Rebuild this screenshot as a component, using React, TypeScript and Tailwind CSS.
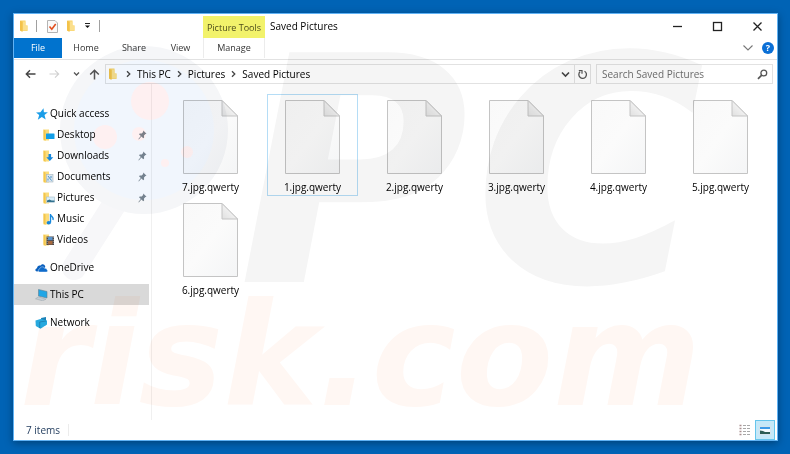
import React from "react";

const files = [
  "7.jpg.qwerty",
  "1.jpg.qwerty",
  "2.jpg.qwerty",
  "3.jpg.qwerty",
  "4.jpg.qwerty",
  "5.jpg.qwerty",
  "6.jpg.qwerty",
];

const quickAccess = [
  { label: "Desktop", icon: "desktop", pinned: true },
  { label: "Downloads", icon: "downloads", pinned: true },
  { label: "Documents", icon: "documents", pinned: true },
  { label: "Pictures", icon: "pictures", pinned: true },
  { label: "Music", icon: "music", pinned: false },
  { label: "Videos", icon: "videos", pinned: false },
];

const FolderIcon = () => (
  <svg width="10" height="12" viewBox="0 0 10 12" aria-hidden="true">
    <path d="M1.5 0.5h5v5h2v5.5h-7z" fill="#f9d266" />
    <path d="M4 1.500h2.500v4h2v5H4z" fill="#fbdf8c" />
    <path d="M1 0.500l2.500 1.500v10L1 10.500z" fill="#f3c24a" />
  </svg>
);

const SmallFolderIcon = ({ kind }: { kind: string }) => (
  <svg width="12" height="12" viewBox="0 0 12 12" aria-hidden="true">
    <path d="M0.5 0.5h5.500v11h-5.500z" fill="#fbdc7c" />
    <path d="M0.5 0.5l2 1v10.500l-2-1.500z" fill="#f3c64c" />
    {kind === "desktop" && <rect x="3" y="4.5" width="8.5" height="5.5" rx="0.5" fill="#139fe8" />}
    {kind === "downloads" && <path d="M5.5 4h2.600v3.200h2.200L6.800 11 3.300 7.200h2.200z" fill="#1687dc" />}
    {kind === "documents" && (
      <>
        <rect x="3.5" y="3.5" width="6.5" height="7.5" fill="#dbe6ee" stroke="#a5b4bf" strokeWidth="0.6" />
        <path d="M5 5l3.500 4.500M8 5v2M5 7.500v2" stroke="#4b93c9" />
      </>
    )}
    {kind === "pictures" && (
      <>
        <rect x="3.5" y="5" width="8" height="5.5" fill="#d9effb" stroke="#a9bdc9" strokeWidth="0.6" />
        <path d="M4 10V8.500l2.500-1 2 1h3V10z" fill="#32728f" />
      </>
    )}
    {kind === "music" && (
      <>
        <path d="M7.500 1v8.500M7.500 1.500c.3 2 3.500 2.300 2.500 5.500" stroke="#1687dc" strokeWidth="1.4" fill="none" />
        <ellipse cx="5.8" cy="9.7" rx="2.2" ry="1.7" fill="#1687dc" />
      </>
    )}
    {kind === "videos" && (
      <>
        <rect x="3.5" y="2.5" width="7.5" height="8.5" fill="#4a4748" />
        <rect x="5" y="3" width="4.5" height="3.2" fill="#5793cc" />
        <rect x="5" y="7" width="4.5" height="3.5" fill="#a86a3e" />
        <path d="M4.200 3v8M10.300 3v8" stroke="#c8c8c8" strokeWidth="0.6" strokeDasharray="1 1" />
      </>
    )}
  </svg>
);

const StarIcon = () => (
  <svg width="12" height="12" viewBox="0 0 12 12" aria-hidden="true">
    <path d="M7.500 0.300l.4 3.900 4 .1-3.400 2.600 1.200 4.600-3.900-2.600L1.800 11.700l1.400-4.600L0 4.600l4.400-.4z" fill="#1a9de8" />
  </svg>
);

const CloudIcon = () => (
  <svg width="13" height="12" viewBox="0 0 13 12" aria-hidden="true">
    <path d="M2 9.500C-.3 9.500 0 6.400 2 6.200 2.200 3.600 4.400 3 5.300 3.700 6.900 1 10.200 2 10.300 5L8 8z" fill="#0a5fbd" />
    <path d="M4.500 10C2.800 9.600 3 7 4.800 6.700 5.200 4.400 8.800 4.200 9.500 6.200c2-.2 2.400.9 2.400 1.500 1.300.5.900 2.300-.4 2.300z" fill="#0f6ccb" stroke="#fff" strokeWidth="0.4" />
  </svg>
);

const ComputerIcon = () => (
  <svg width="13" height="12" viewBox="0 0 13 12" aria-hidden="true">
    <path d="M3.500 0.500l8.500 2v6.500l-8.500-2z" fill="#20a6e6" stroke="#5f7f92" strokeWidth="0.6" />
    <path d="M0.500 9.800l3-2 7.500 2.400-3.500 1.600z" fill="#c3ccd2" stroke="#96a2aa" strokeWidth="0.5" />
  </svg>
);

const NetworkIcon = () => (
  <svg width="13" height="12" viewBox="0 0 13 12" aria-hidden="true">
    <path d="M6 1l5-1v8l-4 1.500z" fill="#1b82b8" />
    <path d="M0.500 3.500l5-1.500 6.500 1.500v4L5.500 11.800 0.800 9z" fill="#27a9de" />
    <path d="M4.600 5l6.500-1M4.700 5v6" stroke="#1877a8" strokeWidth="0.7" />
  </svg>
);

const PinIcon = () => (
  <svg width="9" height="10" viewBox="0 0 9 10" aria-hidden="true">
    <path d="M5.300 0.500L8.500 3.700 7.400 4 6 5.600l.1 2-.8.700L3.400 6.600 0.800 9.400 0.400 9l2.400-3L1 4.200l.7-.8 2 .1L5.100 2z" fill="#7b8790" />
  </svg>
);

const PageIcon = () => (
  <svg width="57" height="76" viewBox="0 0 57 76" aria-hidden="true">
    <defs>
      <linearGradient id="page" x1="0" y1="0" x2="1" y2="1">
        <stop offset="0" stopColor="#f9f9f9" />
        <stop offset="0.5" stopColor="#fbfbfb" />
        <stop offset="1" stopColor="#f4f5f6" />
      </linearGradient>
      <linearGradient id="fold" x1="0" y1="1" x2="0.6" y2="0.4">
        <stop offset="0" stopColor="#e0e0e0" />
        <stop offset="1" stopColor="#f3f3f3" />
      </linearGradient>
    </defs>
    <path d="M1.500 1.500h38.500l15.500 15.500v57.500h-54z" fill="url(#page)" stroke="#c4c4c4" />
    <path d="M40 1.500V17h15.500z" fill="url(#fold)" stroke="#c4c4c4" />
  </svg>
);

const Chevron = () => (
  <svg width="5" height="8" viewBox="0 0 5 8" fill="none" aria-hidden="true">
    <path d="M1 1.200L3.800 4 1 6.800" stroke="#444" strokeWidth="1.3" />
  </svg>
);

const Watermark = () => (
  <svg
    className="pointer-events-none absolute inset-0 h-full w-full mix-blend-multiply"
    viewBox="0 0 790 454"
    aria-hidden="true"
  >
    <path d="M114 205L74 268" stroke="#f7f7f9" strokeWidth="24" strokeLinecap="round" />
    <circle cx="144" cy="130" r="84" fill="#f5f6f8" />
    <circle cx="144" cy="130" r="70" fill="#f1f6fd" />
    <g fill="#fef0f1">
      <circle cx="150" cy="101" r="19" />
      <circle cx="105" cy="137" r="12" />
      <circle cx="139" cy="134" r="7" />
      <circle cx="187" cy="152" r="6" />
      <circle cx="165" cy="163" r="4" />
    </g>
    <g fontFamily="DejaVu Sans, sans-serif" fontWeight="bold" fontStyle="italic">
      <text x="238" y="282" fontSize="315" fill="#f5f5f5">P</text>
      <text x="474" y="282" fontSize="315" fill="#f5f5f5">C</text>
      <text x="20" y="405" fontSize="142" fill="#fff7f3">risk.com</text>
    </g>
  </svg>
);

const TitleBar = () => (
  <div className="flex h-6 items-center text-black">
    <div className="flex w-[189px] items-center pl-[5px]">
      <FolderIcon />
      <span className="ml-[7px] h-3 w-px bg-[#a0a0a0]" />
      <button aria-label="Properties" className="ml-[10px]">
        <svg width="11" height="13" viewBox="0 0 11 13" fill="none">
          <path d="M0.500 0.500h7.500l2.500 2.500v9.500h-10z" fill="#fafafa" stroke="#b4b4b4" />
          <path d="M2.500 6.500l2.300 2.800L8.700 4" stroke="#e2501f" strokeWidth="1.6" />
        </svg>
      </button>
      <button aria-label="New folder" className="ml-2">
        <FolderIcon />
      </button>
      <button aria-label="Customize Quick Access Toolbar" className="ml-2">
        <svg width="7" height="6" viewBox="0 0 7 6">
          <path d="M1 0.500h5" stroke="#222" />
          <path d="M1 2.500h5L3.500 5z" fill="#111" />
        </svg>
      </button>
      <span className="ml-2 h-3 w-px bg-[#a0a0a0]" />
    </div>
    <div className="mt-[2px] flex h-[22px] w-[62px] items-center justify-center bg-[#f2f26b] pt-[2px] text-[9px] whitespace-nowrap text-[#4d4d1c]">
      Picture Tools
    </div>
    <h1 className="flex-1 pl-[5px] text-[10px]">Saved Pictures</h1>
    <div className="flex">
      <button aria-label="Minimize" className="flex w-10 justify-center">
        <svg width="11" height="11" viewBox="0 0 11 11"><path d="M1 5.500h9" stroke="#222" strokeWidth="1.3" /></svg>
      </button>
      <button aria-label="Maximize" className="flex w-10 justify-center">
        <svg width="11" height="11" viewBox="0 0 11 11" fill="none"><rect x="1.5" y="1.5" width="8" height="8" stroke="#222" strokeWidth="1.3" /></svg>
      </button>
      <button aria-label="Close" className="flex w-10 justify-center">
        <svg width="11" height="11" viewBox="0 0 11 11"><path d="M1.500 1.500l8 8M9.500 1.500l-8 8" stroke="#222" strokeWidth="1.3" /></svg>
      </button>
    </div>
  </div>
);

const Ribbon = () => (
  <div className="flex h-[22px] items-start border-b border-[#e2e2e2] text-[9px] text-[#333]">
    <button className="h-5 w-12 bg-[#0173ce] text-white">File</button>
    <button className="h-5 w-12">Home</button>
    <button className="h-5 w-12">Share</button>
    <button className="h-5 w-[45px]">View</button>
    <button className="h-5 w-[62px] border-x border-[#ececec]">Manage</button>
    <div className="flex h-5 flex-1 items-center justify-end gap-2 pr-[3px]">
      <button aria-label="Expand the Ribbon">
        <svg width="12" height="8" viewBox="0 0 12 8" fill="none"><path d="M1.500 1.500L6 6l4.500-4.500" stroke="#777" strokeWidth="1.1" /></svg>
      </button>
      <button aria-label="Help" className="flex size-3 items-center justify-center rounded-full bg-[#0a6fd6] text-[9px] font-bold text-white">
        ?
      </button>
    </div>
  </div>
);

const AddressBar = () => (
  <div className="mt-1 flex h-5 items-center pr-[4px] text-[10px] text-black">
    <div className="flex w-[91px] items-center pl-[11px]">
      <button aria-label="Back">
        <svg width="11" height="10" viewBox="0 0 11 10" fill="none"><path d="M10.500 5H1.500M5 1.300L1.300 5 5 8.700" stroke="#444" strokeWidth="1.4" /></svg>
      </button>
      <button aria-label="Forward" className="ml-[13px]">
        <svg width="11" height="10" viewBox="0 0 11 10" fill="none"><path d="M0.500 5h9M6 1.300L9.700 5 6 8.700" stroke="#d0d0d0" strokeWidth="1.1" /></svg>
      </button>
      <button aria-label="Recent locations" className="ml-[13px]">
        <svg width="7" height="6" viewBox="0 0 7 6" fill="none"><path d="M1 1.500L3.500 4 6 1.500" stroke="#555" strokeWidth="1.300" /></svg>
      </button>
      <button aria-label="Up" className="ml-[9px]">
        <svg width="11" height="11" viewBox="0 0 11 11" fill="none"><path d="M5.500 10.500v-9M1.200 5.500l4.300-4.300 4.300 4.300" stroke="#555" strokeWidth="1.500" /></svg>
      </button>
    </div>
    <div className="flex h-5 flex-1 items-center border border-[#e2e2e2] pl-[2px]">
      <FolderIcon />
      <nav aria-label="Address" className="flex flex-1 items-center gap-[6px] pl-2">
        <Chevron />
        <a href="#this-pc">This PC</a>
        <Chevron />
        <a href="#pictures">Pictures</a>
        <Chevron />
        <a href="#saved-pictures">Saved Pictures</a>
      </nav>
      <button aria-label="Previous locations" className="px-1">
        <svg width="9" height="7" viewBox="0 0 9 7" fill="none"><path d="M1 1.500L4.500 5 8 1.500" stroke="#444" strokeWidth="1.600" /></svg>
      </button>
      <button aria-label="Refresh" className="flex h-full w-4 items-center justify-center border-l border-[#e2e2e2]">
        <svg width="10" height="11" viewBox="0 0 10 11" fill="none">
          <path d="M6.500 2.200A3.800 3.800 0 1 1 2.200 2.600" stroke="#555" strokeWidth="1.300" />
          <path d="M0.800 1.500h3.200v3.200" stroke="#555" strokeWidth="1.200" />
        </svg>
      </button>
    </div>
    <label className="ml-[5px] flex h-5 w-[177px] items-center border border-[#e2e2e2] pr-1 pl-[5px]">
      <input
        type="text"
        aria-label="Search Saved Pictures"
        placeholder="Search Saved Pictures"
        className="min-w-0 flex-1 bg-transparent text-[10px] outline-none placeholder:text-[#6d6d6d]"
      />
      <svg width="11" height="11" viewBox="0 0 11 11" fill="none" aria-hidden="true">
        <circle cx="6.800" cy="4" r="2.900" stroke="#555" strokeWidth="1.300" />
        <path d="M4.700 6.100L1 9.800" stroke="#555" strokeWidth="1.700" />
      </svg>
    </label>
  </div>
);

const Sidebar = () => (
  <nav aria-label="Folders" className="flex w-[138px] flex-col border-r border-[#f0f0f0] pt-[19px] pr-[2px] text-[10px] text-black">
    <a href="#quick-access" className="flex h-[21px] items-center gap-[2px] pl-[22px]">
      <StarIcon />
      Quick access
    </a>
    {quickAccess.map((item) => (
      <a key={item.label} href={`#${item.icon}`} className="flex h-[21px] items-center gap-[2px] pr-[2px] pl-[29px]">
        <SmallFolderIcon kind={item.icon} />
        <span className="flex-1">{item.label}</span>
        {item.pinned && <PinIcon />}
      </a>
    ))}
    <a href="#onedrive" className="mt-[7px] flex h-[21px] items-center gap-[2px] pl-[21px]">
      <CloudIcon />
      OneDrive
    </a>
    <a href="#this-pc" className="mt-[6px] flex h-[21px] items-center gap-[2px] bg-[#d9d9d9] pl-[21px]">
      <ComputerIcon />
      This PC
    </a>
    <a href="#network" className="mt-[7px] flex h-[21px] items-center gap-[2px] pl-[21px]">
      <NetworkIcon />
      Network
    </a>
  </nav>
);

const FileList = () => (
  <main className="flex flex-1 flex-wrap content-start gap-x-[11px] gap-y-px pt-[10px] pl-[13px]">
    {files.map((name, index) => (
      <button
        key={name}
        className={`flex h-[102px] w-[91px] flex-col items-center border pt-[4px] text-[10px] text-black ${
          index === 1 ? "border-[#b5ddf6]" : "border-transparent"
        }`}
      >
        <PageIcon />
        <span className="mt-1 leading-4">{name}</span>
      </button>
    ))}
  </main>
);

const StatusBar = () => (
  <div className="flex h-5 items-center pr-[2px] pl-3 text-[10px] text-[#1e395b]">
    <span>7 items</span>
    <span className="ml-2 h-3 w-px bg-[#ececec]" />
    <div className="flex flex-1 items-center justify-end gap-1">
      <button aria-label="Details view">
        <svg width="12" height="12" viewBox="0 0 12 12" fill="none">
          <path d="M0.500 1.500h2M0.500 4.500h2M0.500 7.500h2M0.500 10.500h2" stroke="#a98f8f" strokeWidth="1.500" />
          <path d="M4 1.500h8M4 4.500h8M4 7.500h8M4 10.500h8" stroke="#a8a8a8" strokeDasharray="3 1" />
        </svg>
      </button>
      <button aria-label="Large icons view" className="flex size-5 items-center justify-center border border-[#66c5ec] bg-[#c5e8f8]">
        <svg width="12" height="9" viewBox="0 0 12 9">
          <rect x="0.5" y="0.5" width="11" height="8" fill="#f4fbff" stroke="#d3e3ec" />
          <path d="M1 1h10v2H1z" fill="#3d9be8" />
          <path d="M1 4.500l3 .500 2 1h5v2H1z" fill="#2b5c55" />
        </svg>
      </button>
    </div>
  </div>
);

export default function App() {
  return (
    <div className="relative flex min-h-screen bg-[#0063b5] py-[13px] pr-3 pl-[13px] font-['Open_Sans','Noto_Sans',sans-serif]">
      <div className="flex flex-1 flex-col border border-[#5fb2f5] bg-white shadow-[0_2px_8px_rgba(0,0,0,0.35)]">
        <TitleBar />
        <Ribbon />
        <AddressBar />
        <div className="flex flex-1">
          <Sidebar />
          <FileList />
        </div>
        <StatusBar />
      </div>
      <Watermark />
    </div>
  );
}
